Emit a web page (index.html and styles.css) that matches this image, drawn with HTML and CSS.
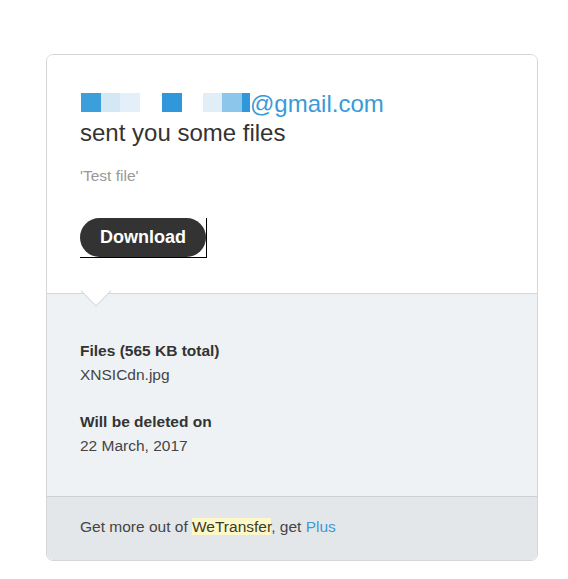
FILE: index.html
```html
<!DOCTYPE html>
<html>
<head>
<meta charset="utf-8">
<link rel="stylesheet" href="styles.css">
</head>
<body>
<div class="card">
  <div class="top">
    <div class="sender"><span class="b b1"></span><span class="b b2"></span><span class="b b3"></span><span class="b gap1"></span><span class="b b4"></span><span class="b gap2"></span><span class="b b5"></span><span class="b b6"></span><span class="b b7"></span>@gmail.com</div>
    <div class="headline">sent you some files</div>
    <div class="message">'Test file'</div>
    <div class="btn-wrap"><a class="btn">Download</a></div>
  </div>
  <div class="details">
    <div class="group">
      <div class="label">Files (565 KB total)</div>
      <div class="value">XNSICdn.jpg</div>
    </div>
    <div class="group">
      <div class="label">Will be deleted on</div>
      <div class="value">22 March, 2017</div>
    </div>
  </div>
  <div class="footer">Get more out of <span class="hl">WeTransfer</span>, get <span class="plus">Plus</span></div>
</div>
</body>
</html>
```
FILE: styles.css
```css
html, body {
  margin: 0;
  padding: 0;
  background: #fff;
}
body {
  font-family: "Liberation Sans", Arial, sans-serif;
  color: #333;
}
.card {
  margin: 54px 0 0 46px;
  width: 490px;
  border: 1px solid #d6d6d6;
  border-radius: 7px;
  overflow: hidden;
}
.top {
  position: relative;
  padding: 34px 33px 35px;
  background: #fff;
  border-bottom: 1px solid #d3d7db;
}
.top::after {
  content: "";
  position: absolute;
  left: 38px;
  bottom: -9px;
  width: 21px;
  height: 21px;
  background: #fff;
  border-right: 1px solid #d3d7db;
  border-bottom: 1px solid #d3d7db;
  transform: rotate(45deg);
  z-index: 2;
}
.sender, .headline {
  font-size: 24px;
  line-height: 29px;
}
.sender {
  color: #3a9ad9;
}
.b {
  display: inline-block;
  height: 19px;
  width: 20px;
  vertical-align: baseline;
}
.b1 { background: #3b9fdc; margin-left: 1px; }
.b2 { background: #d4e7f4; width: 19px; }
.b3 { background: #e3f0f9; }
.gap1 { width: 22px; }
.b4 { background: #2f97da; }
.gap2 { width: 21px; }
.b5 { background: #e1eef8; width: 19px; }
.b6 { background: #8cc6ea; }
.b7 { background: #2e98da; width: 8px; }
.headline {
  color: #333;
}
.message {
  margin-top: 19px;
  font-size: 15.5px;
  line-height: 20px;
  color: #999;
}
.btn-wrap {
  margin-top: 32px;
  display: inline-block;
  border-right: 1px solid #000;
  border-bottom: 1px solid #000;
}
.btn {
  display: flex;
  align-items: center;
  justify-content: center;
  width: 126px;
  height: 39px;
  border-radius: 20px;
  background: #333;
  color: #fff;
  font-weight: bold;
  font-size: 18px;
}
.details {
  background: #eff2f5;
  padding: 45px 33px 38px;
  font-size: 15.5px;
  line-height: 24px;
  border-bottom: 1px solid #cdd1d5;
}
.group + .group {
  margin-top: 23px;
}
.label {
  font-weight: bold;
  color: #333;
}
.value {
  color: #444;
}
.footer {
  background: #e4e7ea;
  padding: 18px 33px 21px;
  font-size: 15.5px;
  line-height: 24px;
  color: #444;
}
.hl {
  background: #fdf8c9;
  color: #3b3b2a;
}
.plus {
  color: #3a9ad9;
}
```
